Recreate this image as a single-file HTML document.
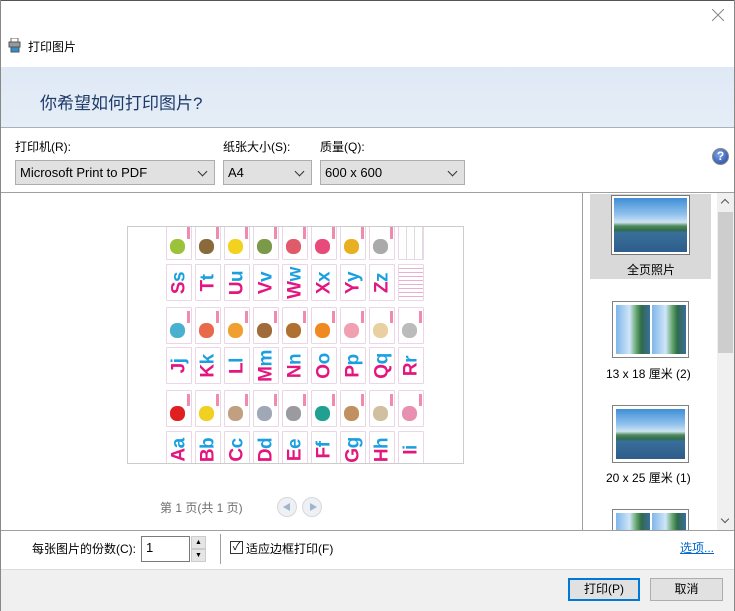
<!DOCTYPE html>
<html><head><meta charset="utf-8"><style>
*{box-sizing:border-box;margin:0;padding:0}
body{width:735px;height:611px;overflow:hidden;background:#fff;font-family:"Liberation Sans","Noto Sans CJK SC",sans-serif;font-size:12px;color:#000;position:relative}
.a{position:absolute}
.sel{position:absolute;top:160px;height:25px;background:#e1e1e1;border:1px solid #adadad;font-size:13px;padding:4px 0 0 4px}
.sel::after{content:"";position:absolute;right:8px;top:7px;width:6px;height:6px;border-right:1px solid #333;border-bottom:1px solid #333;transform:rotate(45deg)}
.card{position:absolute;width:26px;background:#fff;border:1px solid #ead6e6;border-radius:1px}
.lt{position:absolute;left:50%;top:50%;transform:translate(-50%,-50%) rotate(-90deg);font-weight:bold;font-size:19px;white-space:nowrap;line-height:1;letter-spacing:-0.5px}
.lt b{color:#e4157f}.lt i{font-style:normal;color:#1a9fe0}
.pic{position:absolute;left:3px;bottom:5px;width:15px;height:15px;border-radius:45%}
.pic::after{content:"";position:absolute;right:-5px;top:-12px;width:3px;height:12px;background:#e85a8a;opacity:.7}
.land{background:linear-gradient(#3f8ed6 0%,#8fc1ec 30%,#cfe3f3 45%,#4e8a5a 52%,#2f6c4e 60%,#3a6f9a 64%,#2d5d8a 100%)}
.land2{background:linear-gradient(90deg,#7fb6ea 0%,#cfe6f8 40%,#5b9f63 62%,#2f6a4c 75%,#3a6f9a 100%)}
</style></head><body>
<div class="a" style="left:0;top:0;width:735px;height:1px;background:#555"></div>
<div class="a" style="left:0;top:0;width:1px;height:611px;background:#888"></div>
<div class="a" style="right:0;top:0;width:1px;height:611px;background:#888"></div>
<svg class="a" style="left:712px;top:9px" width="12" height="12"><path d="M0 0L12 12M12 0L0 12" stroke="#888" stroke-width="1"/></svg>
<svg class="a" style="left:8px;top:38px" width="14" height="15"><rect x="3" y="0" width="7" height="4" fill="#fff" stroke="#666"/><rect x="1" y="4" width="11" height="5" fill="#999" stroke="#555"/><rect x="3" y="9" width="8" height="5" fill="#2f8fd0" stroke="#555"/></svg>
<div class="a" style="left:28px;top:38px;font-size:12px">打印图片</div>
<div class="a" style="left:1px;top:67px;width:733px;height:61px;background:linear-gradient(#dfe9f5,#e5edf7);border-bottom:1px solid #a8b2bd"></div>
<div class="a" style="left:40px;top:89px;font-size:17px;color:#1e3a68">你希望如何打印图片?</div>
<div class="a" style="left:15px;top:138px">打印机(R):</div>
<div class="a" style="left:223px;top:138px">纸张大小(S):</div>
<div class="a" style="left:320px;top:138px">质量(Q):</div>
<div class="sel" style="left:15px;width:200px">Microsoft Print to PDF</div>
<div class="sel" style="left:223px;width:89px">A4</div>
<div class="sel" style="left:320px;width:145px">600 x 600</div>
<div class="a" style="left:712px;top:148px;width:17px;height:17px;border-radius:50%;background:radial-gradient(circle at 40% 35%,#7ea6e8,#1c3f9a);border:1px solid #888;color:#fff;font-weight:bold;font-size:12px;text-align:center;line-height:15px">?</div>
<div class="a" style="left:1px;top:192px;width:733px;height:1px;background:#a0a0a0"></div>
<div class="a" style="left:582px;top:193px;width:1px;height:337px;background:#a0a0a0"></div>
<div class="a" style="left:127px;top:226px;width:337px;height:238px;border:1px solid #ccc;overflow:hidden">
<div class="a" style="left:38px;top:-4px;width:300px;height:250px">
<div class="card" style="left:0;top:0;height:37px"><div class="pic" style="background:#9bc23a"></div></div>
<div class="card" style="left:29px;top:0;height:37px"><div class="pic" style="background:#8a6a3a"></div></div>
<div class="card" style="left:58px;top:0;height:37px"><div class="pic" style="background:#f3d21f"></div></div>
<div class="card" style="left:87px;top:0;height:37px"><div class="pic" style="background:#7a9a4a"></div></div>
<div class="card" style="left:116px;top:0;height:37px"><div class="pic" style="background:#e05a6a"></div></div>
<div class="card" style="left:145px;top:0;height:37px"><div class="pic" style="background:#e84a7a"></div></div>
<div class="card" style="left:174px;top:0;height:37px"><div class="pic" style="background:#e8b020"></div></div>
<div class="card" style="left:203px;top:0;height:37px"><div class="pic" style="background:#aaa"></div></div>
<div class="card" style="left:232px;top:0;height:37px;background:repeating-linear-gradient(90deg,#fff 0 7px,#ddd 7px 8px)"></div>
<div class="card" style="left:0;top:41px;height:37px"><div class="lt"><b>S</b><i>s</i></div></div>
<div class="card" style="left:29px;top:41px;height:37px"><div class="lt"><b>T</b><i>t</i></div></div>
<div class="card" style="left:58px;top:41px;height:37px"><div class="lt"><b>U</b><i>u</i></div></div>
<div class="card" style="left:87px;top:41px;height:37px"><div class="lt"><b>V</b><i>v</i></div></div>
<div class="card" style="left:116px;top:41px;height:37px"><div class="lt"><b>W</b><i>w</i></div></div>
<div class="card" style="left:145px;top:41px;height:37px"><div class="lt"><b>X</b><i>x</i></div></div>
<div class="card" style="left:174px;top:41px;height:37px"><div class="lt"><b>Y</b><i>y</i></div></div>
<div class="card" style="left:203px;top:41px;height:37px"><div class="lt"><b>Z</b><i>z</i></div></div>
<div class="card" style="left:232px;top:41px;height:37px;background:repeating-linear-gradient(#fff 0 3px,#e8b0d0 3px 4px)"></div>
<div class="card" style="left:0;top:84px;height:37px"><div class="pic" style="background:#4ab0d0"></div></div>
<div class="card" style="left:29px;top:84px;height:37px"><div class="pic" style="background:#e86a4a"></div></div>
<div class="card" style="left:58px;top:84px;height:37px"><div class="pic" style="background:#f0a030"></div></div>
<div class="card" style="left:87px;top:84px;height:37px"><div class="pic" style="background:#a06a3a"></div></div>
<div class="card" style="left:116px;top:84px;height:37px"><div class="pic" style="background:#b07030"></div></div>
<div class="card" style="left:145px;top:84px;height:37px"><div class="pic" style="background:#f08a20"></div></div>
<div class="card" style="left:174px;top:84px;height:37px"><div class="pic" style="background:#f0a0b0"></div></div>
<div class="card" style="left:203px;top:84px;height:37px"><div class="pic" style="background:#e8d0a0"></div></div>
<div class="card" style="left:232px;top:84px;height:37px"><div class="pic" style="background:#bbb"></div></div>
<div class="card" style="left:0;top:124px;height:37px"><div class="lt"><b>J</b><i>j</i></div></div>
<div class="card" style="left:29px;top:124px;height:37px"><div class="lt"><b>K</b><i>k</i></div></div>
<div class="card" style="left:58px;top:124px;height:37px"><div class="lt"><b>L</b><i>l</i></div></div>
<div class="card" style="left:87px;top:124px;height:37px"><div class="lt"><b>M</b><i>m</i></div></div>
<div class="card" style="left:116px;top:124px;height:37px"><div class="lt"><b>N</b><i>n</i></div></div>
<div class="card" style="left:145px;top:124px;height:37px"><div class="lt"><b>O</b><i>o</i></div></div>
<div class="card" style="left:174px;top:124px;height:37px"><div class="lt"><b>P</b><i>p</i></div></div>
<div class="card" style="left:203px;top:124px;height:37px"><div class="lt"><b>Q</b><i>q</i></div></div>
<div class="card" style="left:232px;top:124px;height:37px"><div class="lt"><b>R</b><i>r</i></div></div>
<div class="card" style="left:0;top:167px;height:37px"><div class="pic" style="background:#e02020"></div></div>
<div class="card" style="left:29px;top:167px;height:37px"><div class="pic" style="background:#f0d020"></div></div>
<div class="card" style="left:58px;top:167px;height:37px"><div class="pic" style="background:#c0a080"></div></div>
<div class="card" style="left:87px;top:167px;height:37px"><div class="pic" style="background:#a0a8b8"></div></div>
<div class="card" style="left:116px;top:167px;height:37px"><div class="pic" style="background:#9a9aa0"></div></div>
<div class="card" style="left:145px;top:167px;height:37px"><div class="pic" style="background:#20a090"></div></div>
<div class="card" style="left:174px;top:167px;height:37px"><div class="pic" style="background:#c09060"></div></div>
<div class="card" style="left:203px;top:167px;height:37px"><div class="pic" style="background:#d0c0a0"></div></div>
<div class="card" style="left:232px;top:167px;height:37px"><div class="pic" style="background:#e890b0"></div></div>
<div class="card" style="left:0;top:208px;height:37px"><div class="lt"><b>A</b><i>a</i></div></div>
<div class="card" style="left:29px;top:208px;height:37px"><div class="lt"><b>B</b><i>b</i></div></div>
<div class="card" style="left:58px;top:208px;height:37px"><div class="lt"><b>C</b><i>c</i></div></div>
<div class="card" style="left:87px;top:208px;height:37px"><div class="lt"><b>D</b><i>d</i></div></div>
<div class="card" style="left:116px;top:208px;height:37px"><div class="lt"><b>E</b><i>e</i></div></div>
<div class="card" style="left:145px;top:208px;height:37px"><div class="lt"><b>F</b><i>f</i></div></div>
<div class="card" style="left:174px;top:208px;height:37px"><div class="lt"><b>G</b><i>g</i></div></div>
<div class="card" style="left:203px;top:208px;height:37px"><div class="lt"><b>H</b><i>h</i></div></div>
<div class="card" style="left:232px;top:208px;height:37px"><div class="lt"><b>I</b><i>i</i></div></div>
</div></div>
<div class="a" style="left:160px;top:499px;color:#6d6d6d;font-size:12px">第 1 页(共 1 页)</div>
<div class="a" style="left:277px;top:497px;width:20px;height:20px;border-radius:50%;background:#eef0f3;border:1px solid #d4d8de"><div class="a" style="left:5px;top:5px;border-right:7px solid #9fb4d0;border-top:4px solid transparent;border-bottom:4px solid transparent"></div></div>
<div class="a" style="left:302px;top:497px;width:20px;height:20px;border-radius:50%;background:#eef0f3;border:1px solid #d4d8de"><div class="a" style="left:7px;top:5px;border-left:7px solid #9fb4d0;border-top:4px solid transparent;border-bottom:4px solid transparent"></div></div>
<div class="a" style="left:590px;top:194px;width:121px;height:85px;background:#d9d9d9"></div>
<div class="a land" style="left:612px;top:196px;width:77px;height:58px;border:2px solid #fff;outline:1px solid #777"></div>
<div class="a" style="left:627px;top:261px">全页照片</div>
<div class="a" style="left:612px;top:301px;width:77px;height:57px;border:1px solid #808080;padding:2px;background:#fff"><div class="a land2" style="left:3px;top:3px;width:34px;height:49px"></div><div class="a land2" style="left:39px;top:3px;width:34px;height:49px"></div></div>
<div class="a" style="left:606px;top:365px;font-size:12px">13 x 18 厘米 (2)</div>
<div class="a" style="left:612px;top:405px;width:77px;height:58px;border:1px solid #808080;padding:3px;background:#fff"><div class="land" style="width:100%;height:100%"></div></div>
<div class="a" style="left:606px;top:469px;font-size:12px">20 x 25 厘米 (1)</div>
<div class="a" style="left:612px;top:509px;width:77px;height:21px;border:1px solid #808080;border-bottom:none;padding:3px 3px 0;background:#fff"><div class="a land2" style="left:3px;top:3px;width:34px;height:18px"></div><div class="a land2" style="left:39px;top:3px;width:34px;height:18px"></div></div>
<div class="a" style="left:717px;top:193px;width:17px;height:337px;background:#f0f0f0"></div>
<div class="a" style="left:718px;top:212px;width:15px;height:141px;background:#cdcdcd"></div>
<div class="a" style="left:722px;top:200px;width:6px;height:6px;border-left:1.5px solid #555;border-top:1.5px solid #555;transform:rotate(45deg)"></div>
<div class="a" style="left:722px;top:516px;width:6px;height:6px;border-right:1.5px solid #555;border-bottom:1.5px solid #555;transform:rotate(45deg)"></div>
<div class="a" style="left:1px;top:530px;width:733px;height:1px;background:#a0a0a0"></div>
<div class="a" style="left:32px;top:540px">每张图片的份数(C):</div>
<div class="a" style="left:141px;top:536px;width:49px;height:26px;border:1px solid #7a7a7a;padding:3px 0 0 4px;font-size:13px">1</div>
<div class="a" style="left:191px;top:536px;width:15px;height:13px;background:#e5e5e5;border:1px solid #ccc;font-size:7px;text-align:center;line-height:11px">▲</div>
<div class="a" style="left:191px;top:549px;width:15px;height:13px;background:#e5e5e5;border:1px solid #ccc;font-size:7px;text-align:center;line-height:11px">▼</div>
<div class="a" style="left:220px;top:534px;width:1px;height:30px;background:#a0a0a0"></div>
<div class="a" style="left:230px;top:541px;width:13px;height:13px;border:1px solid #333;font-size:11px;line-height:11px;text-align:center">✓</div>
<div class="a" style="left:246px;top:540px">适应边框打印(F)</div>
<div class="a" style="left:680px;top:539px;color:#0066cc;text-decoration:underline">选项...</div>
<div class="a" style="left:1px;top:569px;width:733px;height:42px;background:#f0f0f0;border-top:1px solid #dcdcdc"></div>
<div class="a" style="left:568px;top:578px;width:72px;height:23px;background:#e1e1e1;border:2px solid #0078d7;text-align:center;line-height:19px">打印(P)</div>
<div class="a" style="left:650px;top:578px;width:73px;height:23px;background:#e1e1e1;border:1px solid #adadad;text-align:center;line-height:21px">取消</div>
</body></html>
